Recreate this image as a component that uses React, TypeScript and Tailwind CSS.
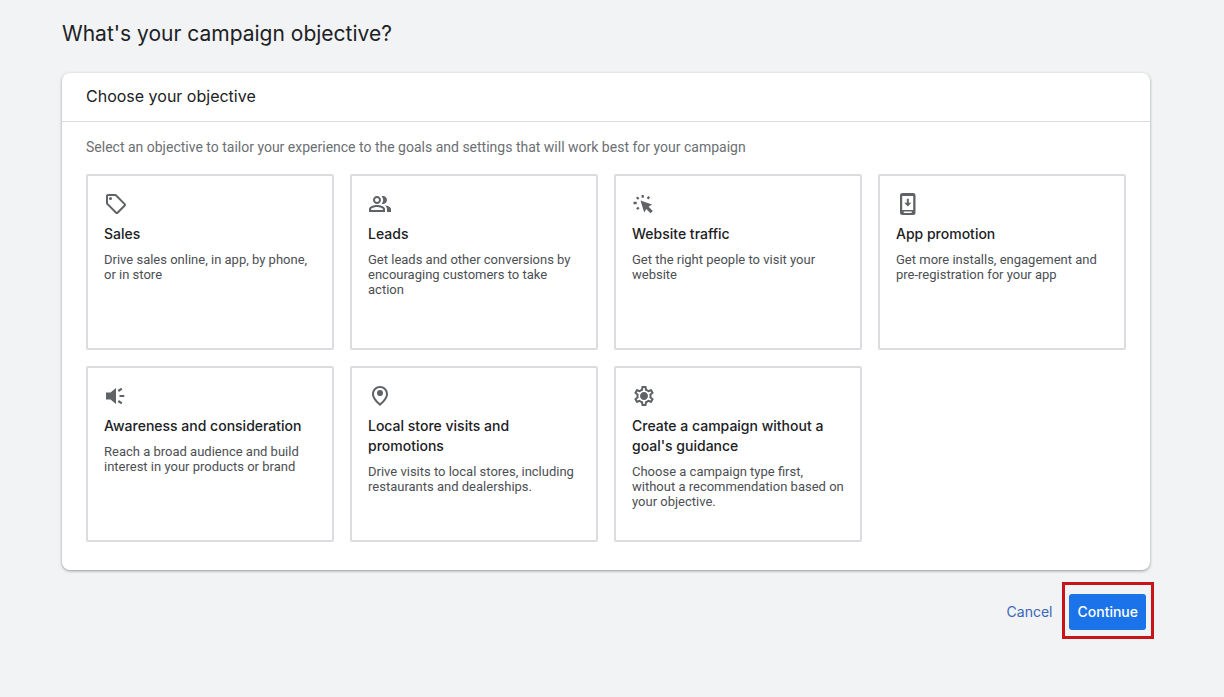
import React from 'react';
import {
  MdOutlineSell,
  MdOutlinePeopleAlt,
  MdOutlinePlace,
  MdOutlineSettings,
} from 'react-icons/md';

interface Objective {
  id: string;
  title: string;
  description: string;
  icon: React.ReactNode;
}

// Cursor with short rays around it
function TrafficIcon() {
  return (
    <svg width="24" height="24" viewBox="0 0 24 24" fill="currentColor" aria-hidden="true">
      <path d="M8.5 8.5l11.500 4-3.400 2.300 4.200 4.200-2.300 2.300-4.200-4.200-2.100 3.400z" />
      <path
        d="M10.700 3v2.800M4.900 5.100l1.600 2M17.300 4.800l-1.800 2M1.500 11h3.200M4.900 17.200l1.900-1.700"
        fill="none"
        stroke="currentColor"
        strokeWidth="2.3"
      />
    </svg>
  );
}

// Phone with a download arrow on its screen
function AppIcon() {
  return (
    <svg width="24" height="24" viewBox="0 0 24 24" fill="currentColor" aria-hidden="true">
      <path
        fillRule="evenodd"
        d="M6.500 1h10.500a2.500 2.500 0 0 1 2.500 2.500v17a2.500 2.500 0 0 1-2.500 2.500H6.500a2.500 2.500 0 0 1-2.500-2.500v-17a2.500 2.500 0 0 1 2.500-2.500zM6.200 4v14h11V4zM7.500 19.500c0 1 .8 1.600 1.800 1.600h4.900c1 0 1.800-.6 1.800-1.600z"
      />
      <path d="M10.800 6.800h2v4h2.500l-3.500 3.800-3.500-3.800h2.500z" />
    </svg>
  );
}

// Loudspeaker with three sound rays
function AwarenessIcon() {
  return (
    <svg width="24" height="24" viewBox="0 0 24 24" fill="currentColor" aria-hidden="true">
      <path d="M2 8.500h4.500L12 4v16l-5.500-4.500H2z" />
      <path
        d="M14.300 7l3.500-2.400M15.500 12H20.300M14.300 17l3.500 2.400"
        fill="none"
        stroke="currentColor"
        strokeWidth="2.2"
      />
    </svg>
  );
}

function PlaceIcon() {
  return (
    <svg width="24" height="24" viewBox="0 0 24 24" fill="currentColor" aria-hidden="true">
      <MdOutlinePlace size={24} />
      <circle cx="12" cy="9" r="3" />
    </svg>
  );
}

function GearIcon() {
  return (
    <svg width="24" height="24" viewBox="0 0 24 24" fill="currentColor" aria-hidden="true">
      <MdOutlineSettings size={24} />
      <circle cx="12" cy="12" r="3" />
    </svg>
  );
}

const objectives: Objective[] = [
  {
    id: 'sales',
    title: 'Sales',
    description: 'Drive sales online, in app, by phone, or in store',
    icon: <MdOutlineSell size={24} />,
  },
  {
    id: 'leads',
    title: 'Leads',
    description: 'Get leads and other conversions by encouraging customers to take action',
    icon: <MdOutlinePeopleAlt size={24} />,
  },
  {
    id: 'traffic',
    title: 'Website traffic',
    description: 'Get the right people to visit your website',
    icon: <TrafficIcon />,
  },
  {
    id: 'app',
    title: 'App promotion',
    description: 'Get more installs, engagement and pre-registration for your app',
    icon: <AppIcon />,
  },
  {
    id: 'awareness',
    title: 'Awareness and consideration',
    description: 'Reach a broad audience and build interest in your products or brand',
    icon: <AwarenessIcon />,
  },
  {
    id: 'local',
    title: 'Local store visits and promotions',
    description: 'Drive visits to local stores, including restaurants and dealerships.',
    icon: <PlaceIcon />,
  },
  {
    id: 'no-goal',
    title: "Create a campaign without a goal's guidance",
    description: 'Choose a campaign type first, without a recommendation based on your objective.',
    icon: <GearIcon />,
  },
];

function ObjectiveCard({ objective }: { objective: Objective }) {
  return (
    <button
      type="button"
      className="flex min-h-44 flex-col items-start rounded-xs border-2 border-[#dadce0] bg-white p-4 text-left hover:border-[#bdc1c6]"
    >
      <span className="text-[#5f6368]">{objective.icon}</span>
      <span className="mt-2 font-['Inter',sans-serif] text-sm leading-5 font-medium text-[#202124]">
        {objective.title}
      </span>
      <span className="mt-2 font-['Roboto',sans-serif] text-[13px] leading-[15px] text-[#4c4f53]">
        {objective.description}
      </span>
    </button>
  );
}

export default function App() {
  return (
    <main className="min-h-screen bg-[#f1f3f4] pt-4 pr-[74px] pb-12 pl-[62px]">
      <h1 className="font-['Inter',sans-serif] text-[21px] leading-9 text-[#202124]">
        What's your campaign objective?
      </h1>

      <section className="mt-[21px] rounded-lg bg-white shadow-[0_1px_3px_rgba(60,64,67,0.5)]">
        <h2 className="border-b border-[#dadce0] px-6 pt-[11px] pb-[13px] font-['Inter',sans-serif] text-base leading-6 text-[#202124]">
          Choose your objective
        </h2>
        <div className="px-6 pt-[15px] pb-7">
          <p className="font-['Roboto',sans-serif] text-sm leading-5 text-[#6b6f73]">
            Select an objective to tailor your experience to the goals and settings that will work best for your campaign
          </p>
          <div className="mt-[17px] grid grid-cols-2 gap-4 md:grid-cols-4">
            {objectives.map((objective) => (
              <ObjectiveCard key={objective.id} objective={objective} />
            ))}
          </div>
        </div>
      </section>

      <div className="mt-3 -mr-1 flex items-center justify-end gap-2.5">
        <button type="button" className="pt-0.5 font-['Inter',sans-serif] text-sm leading-5 text-[#3b66b8]">
          Cancel
        </button>
        <div className="border-3 border-[#c81418] pt-[9px] pr-[5px] pb-1.5 pl-1">
          <button
            type="button"
            className="block h-9 rounded-[3px] bg-[#1a73e8] px-2 font-['Inter',sans-serif] text-sm font-medium text-white"
          >
            Continue
          </button>
        </div>
      </div>
    </main>
  );
}
